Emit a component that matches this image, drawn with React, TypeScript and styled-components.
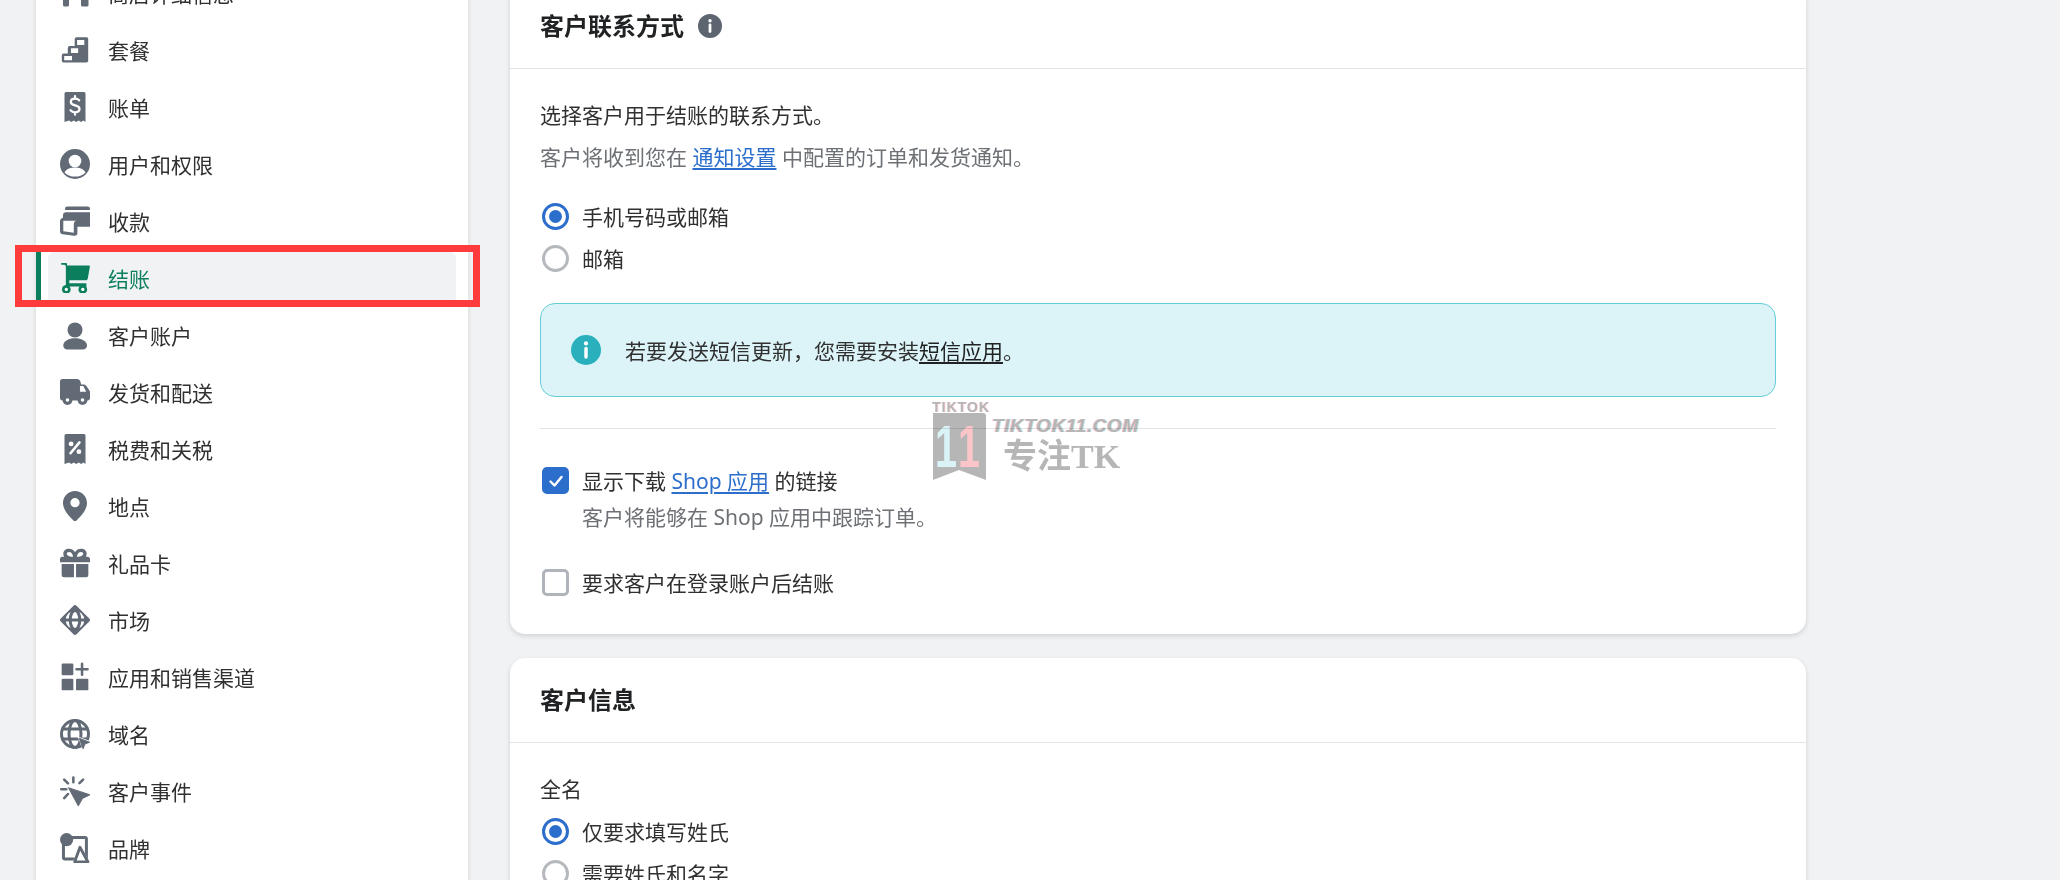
import { ReactNode } from 'react';
import styled, { createGlobalStyle } from 'styled-components';

const GlobalStyle = createGlobalStyle`
  html, body {
    margin: 0;
    height: 100%;
    background: #f1f2f4;
    overflow: hidden;
  }
  body {
    font-family: "Noto Sans", "Noto Sans CJK SC", sans-serif;
    color: #303030;
  }
`;

const ICON = '#616a75';
const GREEN = '#0b7f5d';

const Viewport = styled.div`
  position: relative;
  width: 2060px;
  height: 880px;
  overflow: hidden;
`;

/* the page is scrolled, so everything starts above the fold */
const Page = styled.div`
  display: flex;
  align-items: flex-start;
  margin-top: -36px;
  padding-left: 36px;
`;

const Sidebar = styled.nav`
  width: 432px;
  min-height: 1000px;
  flex: none;
  margin-right: 42px;
  background: #fff;
  box-shadow: 0 0 5px rgba(23, 24, 24, 0.12);
`;

const NavRow = styled.div<{ $active?: boolean }>`
  position: relative;
  height: 57px;
  box-sizing: border-box;
  padding: 3px 12px;

  ${(p) =>
    p.$active &&
    `
    &::before {
      content: '';
      position: absolute;
      left: 0;
      top: 3px;
      bottom: 3px;
      width: 5px;
      background: ${GREEN};
    }
  `}
`;

const NavInner = styled.div<{ $active?: boolean }>`
  display: flex;
  align-items: center;
  gap: 18px;
  height: 100%;
  padding-left: 12px;
  border-radius: 6px;
  font-size: 21px;
  color: ${(p) => (p.$active ? GREEN : '#303030')};
  background: ${(p) => (p.$active ? '#f1f2f4' : 'transparent')};
`;

const NavIconWrap = styled.span<{ $active?: boolean }>`
  display: flex;
  color: ${(p) => (p.$active ? GREEN : ICON)};
`;

const NavIcon = styled.svg`
  width: 30px;
  height: 30px;
  flex: none;
  fill: currentColor;
`;

const RedFrame = styled.div`
  position: absolute;
  left: -21px;
  top: -4px;
  width: 465px;
  height: 62px;
  box-sizing: border-box;
  border: 7px solid #ff3b3b;
  pointer-events: none;
`;

const Main = styled.main`
  width: 1296px;
  flex: none;
  padding-top: 20px;
  display: flex;
  flex-direction: column;
  gap: 24px;
`;

const Card = styled.section`
  background: #fff;
  border-radius: 15px;
  box-shadow: 0 2px 5px rgba(23, 24, 24, 0.14);
`;

const CardHeader = styled.header`
  display: flex;
  align-items: center;
  gap: 14px;
  height: 85px;
  box-sizing: border-box;
  padding: 0 30px;
  border-bottom: 1px solid #e1e3e5;
`;

const CardTitle = styled.h2`
  margin: 0;
  font-size: 24px;
  font-weight: 700;
  line-height: 30px;
  color: #202223;
`;

const CardBody = styled.div<{ $top: number; $bottom: number }>`
  padding: ${(p) => p.$top}px 30px ${(p) => p.$bottom}px;
`;

const Line = styled.p<{ $muted?: boolean }>`
  margin: 0;
  font-size: 21px;
  line-height: 42px;
  color: ${(p) => (p.$muted ? '#6d7175' : '#303030')};
`;

const Link = styled.a`
  color: #2c6ecb;
  text-decoration: underline;
  text-underline-offset: 3px;
`;

const RadioGroup = styled.div<{ $top?: number }>`
  margin-top: ${(p) => p.$top ?? 0}px;
`;

const RadioRow = styled.label`
  display: flex;
  align-items: center;
  gap: 13px;
  height: 42px;
  padding-left: 2px;
  font-size: 21px;
`;

const RadioDot = styled.span<{ $on?: boolean }>`
  width: 27px;
  height: 27px;
  flex: none;
  box-sizing: border-box;
  border-radius: 50%;
  border: 3px solid ${(p) => (p.$on ? '#2c6ecb' : '#b5b9be')};
  display: flex;
  align-items: center;
  justify-content: center;

  &::after {
    content: '';
    width: 13px;
    height: 13px;
    border-radius: 50%;
    background: ${(p) => (p.$on ? '#2c6ecb' : 'transparent')};
  }
`;

const Callout = styled.div`
  display: flex;
  align-items: center;
  gap: 24px;
  height: 94px;
  margin-top: 24px;
  padding-left: 30px;
  box-sizing: border-box;
  background: #dcf4f7;
  border: 1px solid #63cdd9;
  border-radius: 15px;
  font-size: 21px;
`;

const CalloutLink = styled.a`
  color: #202223;
  text-decoration: underline;
  text-underline-offset: 3px;
`;

const Divider = styled.hr`
  margin: 31px 0 0;
  border: 0;
  border-top: 1px solid #e1e3e5;
`;

const CheckRow = styled.div<{ $top: number }>`
  display: flex;
  align-items: flex-start;
  gap: 13px;
  margin-top: ${(p) => p.$top}px;
  padding-left: 2px;
  font-size: 21px;
  line-height: 36px;
`;

const CheckBox = styled.span<{ $on?: boolean }>`
  width: 27px;
  height: 27px;
  flex: none;
  margin-top: 4px;
  box-sizing: border-box;
  border-radius: 5px;
  border: 3px solid ${(p) => (p.$on ? '#2c6ecb' : '#aeb4b9')};
  background: ${(p) => (p.$on ? '#2c6ecb' : '#fff')};
  display: flex;
  align-items: center;
  justify-content: center;
`;

const HelpText = styled.div`
  color: #6d7175;
`;

/* watermark lying over the page */
const Watermark = styled.div`
  position: absolute;
  left: 932px;
  top: 402px;
  width: 210px;
  height: 84px;
  display: flex;
  gap: 4px;
  mix-blend-mode: multiply;
  color: #b6b6b6;
`;

const WmBadge = styled.div`
  width: 56px;
  flex: none;
  text-align: center;
`;

const WmSmall = styled.div`
  font-family: "Liberation Sans", sans-serif;
  font-weight: 700;
  font-size: 14px;
  line-height: 11px;
  letter-spacing: 1px;
  text-shadow: 1px 0 #fbd0d4;
`;

const WmLogo = styled.svg`
  display: block;
`;

const WmText = styled.div`
  padding-top: 14px;
`;

const WmSite = styled.div`
  font-family: "Liberation Sans", sans-serif;
  font-weight: 700;
  font-style: italic;
  font-size: 19px;
  line-height: 20px;
  letter-spacing: 0.6px;
  white-space: nowrap;
  text-shadow: -1px 0 #fbc5c9, 1px 0 #bfeaf0;
`;

const WmSlogan = styled.div`
  margin: 3px 0 0 11px;
  font-family: "Liberation Serif", "Noto Sans CJK SC", serif;
  font-weight: 700;
  font-size: 34px;
  line-height: 36px;
  white-space: nowrap;
`;

const InfoSvg = styled.svg`
  flex: none;
`;

const Icon = ({ children }: { children: ReactNode }) => (
  <NavIcon viewBox="0 0 20 20">{children}</NavIcon>
);

const receiptBody =
  'M4 0h12a1 1 0 0 1 1 1v19l-1.4-1-1.5 1-1.6-1-1.7 1-1.6-1-1.6 1-1.6-1L3 20V1a1 1 0 0 1 1-1z';

const icons: Record<string, ReactNode> = {
  store: (
    <Icon>
      <path d="M2 1h18v5H2zM2 8h4v10a1 1 0 0 1-1 1H3a1 1 0 0 1-1-1zM14 8h5v10a1 1 0 0 1-1 1h-3a1 1 0 0 1-1-1z" />
    </Icon>
  ),
  plan: (
    <Icon>
      <path
        fillRule="evenodd"
        d="M11 1.5h6.8a1 1 0 0 1 1 1V17.2a1.2 1.2 0 0 1-1.2 1.2H2.4a1.2 1.2 0 0 1-1.2-1.2v-3.6a1.2 1.2 0 0 1 1.2-1.2h2.8V8.6a1.2 1.2 0 0 1 1.2-1.2h3.4V2.6A1.2 1.2 0 0 1 11 1.5zM11.4 3.4v3.2h4.8V3.4zM7.3 8.8V12h4.8V8.8zM2.8 14v2.8h5.2V14z"
      />
    </Icon>
  ),
  bill: (
    <Icon>
      <path d={receiptBody} />
      <path
        d="M12.8 5.6C12.2 4.8 11.2 4.4 10 4.4c-1.6 0-2.8.9-2.8 2.2 0 3 5.8 1.6 5.8 4.6 0 1.4-1.3 2.3-3 2.3-1.2 0-2.3-.5-3-1.3M10 2.8v1.6M10 13.5v1.6"
        fill="none"
        stroke="#fff"
        strokeWidth="1.5"
        strokeLinecap="round"
      />
    </Icon>
  ),
  user: (
    <Icon>
      <circle cx="10" cy="10" r="10" />
      <circle cx="10" cy="8" r="4.2" fill="#fff" />
      <path d="M3 15.6c1.6-2.6 4.4-3.2 7-3.2s5.4.6 7 3.2c-1.6 1.8-4 2.8-7 2.8s-5.4-1-7-2.8z" fill="#fff" />
    </Icon>
  ),
  payments: (
    <Icon>
      <path d="M5 .4h13.4A1.6 1.6 0 0 1 20 2v.7H3.3V2A1.6 1.6 0 0 1 5 .4z" />
      <path
        fillRule="evenodd"
        d="M4 4.2h16v9.6h-8.4V18c0 1.3-.9 2-2.2 1.8l-7.6-1A2 2 0 0 1 0 16.8V10.2C0 9 .8 8.2 2 7.9V6.2a2 2 0 0 1 2-2zM2.2 9.9v7l7 1V12.4c0-1.4.6-2.5 2-2.5z"
      />
    </Icon>
  ),
  cart: (
    <Icon>
      <path d="M.8-.8h2.6c.6 0 1 .4 1.1 1L4.8 1.6h14.4c.5 0 .8.4.7.9l-1.4 8c-.1.6-.6 1-1.2 1H6.2v2h11.4v2.1H4.9a1 1 0 0 1-1-1V2L3 1.2H.8z" />
      <circle cx="4.2" cy="17.6" r="2.9" />
      <circle cx="4.2" cy="17.6" r="1.1" fill="#fff" />
      <circle cx="15.2" cy="17.6" r="2.9" />
      <circle cx="15.2" cy="17.6" r="1.1" fill="#fff" />
    </Icon>
  ),
  person: (
    <Icon>
      <circle cx="10" cy="6.6" r="5" />
      <path d="M2.2 17c0-3 3.8-4.8 7.8-4.8s8 1.8 8 4.8c0 1.5-1 2.6-2.500 2.600h-11C3.200 19.600 2.200 18.500 2.200 17z" />
    </Icon>
  ),
  truck: (
    <Icon>
      <path
        fillRule="evenodd"
        d="M1.6 1.3h9.800c1 0 1.900.7 2.200 1.700l.5 2h1.600c.8 0 1.500.4 1.900 1l2 3c.2.3.4.7.4 1.100v3.900c0 1-.7 1.600-1.600 1.600H1.600C.7 15.600 0 14.900 0 14V2.900c0-.9.7-1.600 1.600-1.600zM13.300 6v3.800h4.200L15.500 6z"
      />
      <circle cx="5" cy="15.3" r="3.3" />
      <circle cx="5" cy="15.3" r="1.2" fill="#fff" />
      <circle cx="15" cy="15.3" r="3.3" />
      <circle cx="15" cy="15.3" r="1.2" fill="#fff" />
    </Icon>
  ),
  tax: (
    <Icon>
      <path d={receiptBody} />
      <circle cx="7.4" cy="6.6" r="1.6" fill="#fff" />
      <circle cx="12.6" cy="11.8" r="1.6" fill="#fff" />
      <path d="M13 5.6 7 12.8" stroke="#fff" strokeWidth="1.7" strokeLinecap="round" />
    </Icon>
  ),
  pin: (
    <Icon>
      <path
        fillRule="evenodd"
        d="M10 0c4.400 0 8 3.500 8 8 0 5-5 9.800-7 11.600a1.500 1.500 0 0 1-2 0C7 17.800 2 13 2 8c0-4.500 3.600-8 8-8zm0 4.700a3.100 3.100 0 1 0 0 6.200 3.100 3.100 0 0 0 0-6.200z"
      />
    </Icon>
  ),
  gift: (
    <Icon>
      <path
        fillRule="evenodd"
        d="M6 .5c1.700 0 3 .8 4 2.200C11 1.300 12.300.5 14 .5c2.300 0 3.800 1.400 3.800 3.300 0 .7-.2 1.400-.5 2h1.200c.8 0 1.500.7 1.500 1.500v2.200H0V7.300c0-.8.7-1.500 1.500-1.500h1.200c-.3-.6-.5-1.300-.5-2C2.200 1.900 3.700.5 6 .5zm0 2.200c-.9 0-1.500.5-1.500 1.100 0 1 1.200 2 4.200 2C8.500 3.900 7.500 2.700 6 2.700zm8 0c-1.500 0-2.500 1.200-2.700 3.100 3 0 4.200-1 4.200-2 0-.6-.6-1.100-1.500-1.100z"
      />
      <path d="M1.100 10.700h8.200v8.800H2.600a1.500 1.500 0 0 1-1.500-1.500zM10.700 10.700h8.200V18a1.500 1.500 0 0 1-1.500 1.500h-6.700z" />
    </Icon>
  ),
  market: (
    <Icon>
      <path d="M9 .5a1.400 1.400 0 0 1 2 0L19.500 9a1.400 1.400 0 0 1 0 2L11 19.500a1.400 1.400 0 0 1-2 0L.5 11a1.400 1.400 0 0 1 0-2z" />
      <circle cx="10" cy="10" r="6.200" fill="#fff" />
      <g fill="none" stroke={ICON} strokeWidth="2">
        <ellipse cx="10" cy="10" rx="3.200" ry="6.400" />
        <path d="M3 10h14" />
      </g>
    </Icon>
  ),
  apps: (
    <Icon>
      <rect x="1.100" y="1" width="7.800" height="7.800" rx="0.800" />
      <rect x="1.100" y="11.100" width="7.800" height="7.800" rx="0.800" />
      <rect x="10.700" y="11.100" width="8.200" height="7.800" rx="0.800" />
      <path d="M14.700 1.100v7.400M11 4.800h7.400" fill="none" stroke={ICON} strokeWidth="1.700" strokeLinecap="round" />
    </Icon>
  ),
  domain: (
    <Icon>
      <g fill="none" stroke={ICON} strokeWidth="2">
        <circle cx="10" cy="10" r="9" />
        <ellipse cx="10" cy="10" rx="4" ry="9" />
        <path d="M1 6.600h18M1 13.400h18" />
      </g>
      <path d="M11.500 11.500 21 15l-3.500 2-2 3.500z" fill="#fff" />
      <path d="M12.800 12.800 19.800 15.500l-3.200 1.200-1.200 3.200z" stroke={ICON} strokeWidth="0.600" strokeLinejoin="round" />
    </Icon>
  ),
  events: (
    <Icon>
      <path d="M5.600 7.800 20 12.500l-5 2.500-2.800 5z" stroke={ICON} strokeWidth="0.600" strokeLinejoin="round" />
      <path
        d="M8.900 1v3.200M15.400 2.400l-2.400 2.400M2.800 2.400l2.500 2.500M.8 8.800h3.400M2.800 14.700l2.500-2.700"
        fill="none"
        stroke={ICON}
        strokeWidth="1.700"
        strokeLinecap="round"
      />
    </Icon>
  ),
  brand: (
    <Icon>
      <path d="M3.300 3h13.300a1 1 0 0 1 1 1v12.300a1 1 0 0 1-1 1H3.300a1 1 0 0 1-1-1V4a1 1 0 0 1 1-1z" fill="none" stroke={ICON} strokeWidth="2" />
      <circle cx="4.400" cy="4.400" r="4.400" />
      <path d="M13.300 7.500 20 20H8.400z" fill="#fff" />
      <path d="M13.300 9.500 18.600 19.200H9.800z" fill="none" stroke={ICON} strokeWidth="1.900" strokeLinejoin="round" />
    </Icon>
  ),
};

const navItems = [
  { key: 'store', label: '商店详细信息' },
  { key: 'plan', label: '套餐' },
  { key: 'bill', label: '账单' },
  { key: 'user', label: '用户和权限' },
  { key: 'payments', label: '收款' },
  { key: 'cart', label: '结账', active: true },
  { key: 'person', label: '客户账户' },
  { key: 'truck', label: '发货和配送' },
  { key: 'tax', label: '税费和关税' },
  { key: 'pin', label: '地点' },
  { key: 'gift', label: '礼品卡' },
  { key: 'market', label: '市场' },
  { key: 'apps', label: '应用和销售渠道' },
  { key: 'domain', label: '域名' },
  { key: 'events', label: '客户事件' },
  { key: 'brand', label: '品牌' },
];

const InfoIcon = ({ size, color }: { size: number; color: string }) => (
  <InfoSvg width={size} height={size} viewBox="0 0 20 20">
    <circle cx="10" cy="10" r="10" fill={color} />
    <circle cx="10" cy="5.600" r="1.400" fill="#fff" />
    <path d="M10 9v5.600" stroke="#fff" strokeWidth="2.300" strokeLinecap="round" />
  </InfoSvg>
);

export default function App() {
  return (
    <Viewport>
      <GlobalStyle />
      <Page>
        <Sidebar>
          {navItems.map((item) => (
            <NavRow key={item.key} $active={item.active}>
              <NavInner $active={item.active}>
                <NavIconWrap $active={item.active}>{icons[item.key]}</NavIconWrap>
                {item.label}
              </NavInner>
              {item.active && <RedFrame />}
            </NavRow>
          ))}
        </Sidebar>

        <Main>
          <Card>
            <CardHeader>
              <CardTitle>客户联系方式</CardTitle>
              <InfoIcon size={24} color="#5c6570" />
            </CardHeader>
            <CardBody $top={25} $bottom={33}>
              <Line>选择客户用于结账的联系方式。</Line>
              <Line $muted>
                客户将收到您在 <Link>通知设置</Link> 中配置的订单和发货通知。
              </Line>
              <RadioGroup $top={17}>
                <RadioRow>
                  <RadioDot $on />
                  手机号码或邮箱
                </RadioRow>
                <RadioRow>
                  <RadioDot />
                  邮箱
                </RadioRow>
              </RadioGroup>
              <Callout>
                <InfoIcon size={30} color="#2ab0bd" />
                <span>
                  若要发送短信更新，您需要安装<CalloutLink>短信应用</CalloutLink>。
                </span>
              </Callout>
              <Divider />
              <CheckRow $top={34}>
                <CheckBox $on>
                  <svg width="18" height="18" viewBox="0 0 18 18">
                    <path d="M3.500 9.500 7.500 13.500 14.500 5" fill="none" stroke="#fff" strokeWidth="2.400" strokeLinecap="round" strokeLinejoin="round" />
                  </svg>
                </CheckBox>
                <div>
                  <div>
                    显示下载 <Link>Shop 应用</Link> 的链接
                  </div>
                  <HelpText>客户将能够在 Shop 应用中跟踪订单。</HelpText>
                </div>
              </CheckRow>
              <CheckRow $top={30}>
                <CheckBox />
                <div>要求客户在登录账户后结账</div>
              </CheckRow>
            </CardBody>
          </Card>

          <Card>
            <CardHeader>
              <CardTitle>客户信息</CardTitle>
            </CardHeader>
            <CardBody $top={25} $bottom={30}>
              <Line>全名</Line>
              <RadioGroup>
                <RadioRow>
                  <RadioDot $on />
                  仅要求填写姓氏
                </RadioRow>
                <RadioRow>
                  <RadioDot />
                  需要姓氏和名字
                </RadioRow>
              </RadioGroup>
            </CardBody>
          </Card>
        </Main>
      </Page>

      <Watermark>
        <WmBadge>
          <WmSmall>TIKTOK</WmSmall>
          <WmLogo width="56" height="67" viewBox="0 0 56 67">
            <path d="M1 0h50a3 3 0 0 1 3 3v64L27 57 1 67z" fill="#b6b6b6" />
            <text x="3" y="54" fontFamily="Liberation Sans, sans-serif" fontWeight="700" fontSize="60" fill="#d9f3f6" textLength="22" lengthAdjust="spacingAndGlyphs">1</text>
            <text x="26" y="54" fontFamily="Liberation Sans, sans-serif" fontWeight="700" fontSize="60" fill="#fbc5c9" textLength="22" lengthAdjust="spacingAndGlyphs">1</text>
          </WmLogo>
        </WmBadge>
        <WmText>
          <WmSite>TIKTOK11.COM</WmSite>
          <WmSlogan>专注TK</WmSlogan>
        </WmText>
      </Watermark>
    </Viewport>
  );
}
